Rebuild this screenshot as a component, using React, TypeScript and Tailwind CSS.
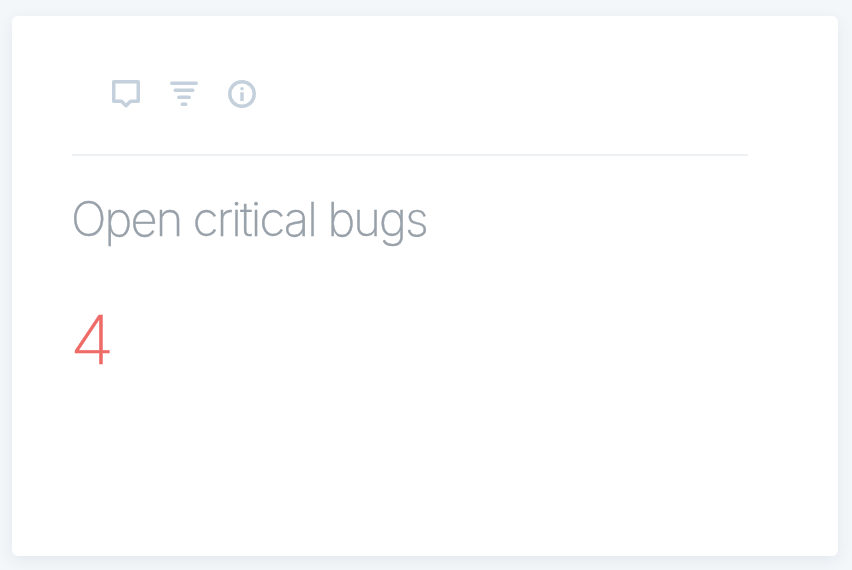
export default function App() {
  return (
    <main className="h-[570px] w-[852px] overflow-hidden bg-[#f3f7fa] pl-3 pt-4 font-['Inter',sans-serif] antialiased">
      <section className="h-[540px] w-[826px] rounded-md bg-white px-15 pt-[60px] shadow-[0_4px_16px_rgba(50,70,90,0.08)]">
        <header className="flex h-20 w-[676px] items-start gap-[26px] border-b-2 border-[#edf1f4] pl-[38px] text-[#c4d1dc]">
          <svg className="size-8" viewBox="0 0 32 32" fill="none" stroke="currentColor" strokeWidth="3.5" strokeLinejoin="round"><path d="M3.75 5.75h24.5v19.5h-7.75L16 29.75l-4.5-4.5H3.75z" /></svg>
          <svg className="size-8" viewBox="0 0 32 32" fill="none" stroke="currentColor" strokeWidth="3.5" strokeLinecap="round"><path d="M3.75 7.25h24.5M7.25 14.25h17.5M10.75 21.25h10.5M14.25 28.25h3.5" /></svg>
          <svg className="size-8" viewBox="0 0 32 32" fill="none" stroke="currentColor" strokeWidth="3.5"><circle cx="16" cy="18" r="12.25" /><path d="M16 16.25v8.75" /><circle cx="16" cy="12.75" r="1.75" fill="currentColor" stroke="none" /></svg>
        </header>
        <h1 className="-ml-px mt-[35px] whitespace-nowrap text-[47px] font-extralight leading-[56px] tracking-[-1.83px] text-[#98a1a9] will-change-transform [-webkit-text-stroke:0.4px_#98a1a9]">Open critical bugs</h1>
        <p className="mt-[53px] w-20 origin-left scale-x-[1.08] -ml-0.5 text-[67px] font-extralight leading-[80px] text-[#ee6b68] will-change-transform [-webkit-text-stroke:0.3px_#ee6b68]">4</p>
      </section>
    </main>
  );
}
